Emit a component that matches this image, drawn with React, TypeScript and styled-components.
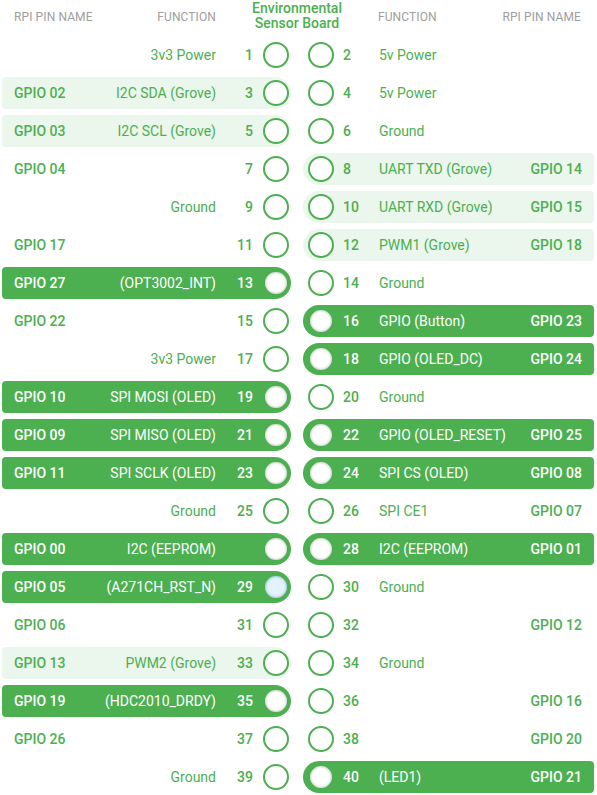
import React from 'react';
import styled, { createGlobalStyle, css } from 'styled-components';

const GREEN = '#4caf50';
const PALE = '#ebf6ec';

type Variant = 'none' | 'light' | 'active';

type Pin = {
    num: number;
    name?: string;
    func?: string;
    variant?: Variant;
    hideNum?: boolean;
    focus?: boolean;
};

const leftPins: Pin[] = [
    { num: 1, func: '3v3 Power' },
    { num: 3, name: 'GPIO 02', func: 'I2C SDA (Grove)', variant: 'light' },
    { num: 5, name: 'GPIO 03', func: 'I2C SCL (Grove)', variant: 'light' },
    { num: 7, name: 'GPIO 04' },
    { num: 9, func: 'Ground' },
    { num: 11, name: 'GPIO 17' },
    { num: 13, name: 'GPIO 27', func: '(OPT3002_INT)', variant: 'active' },
    { num: 15, name: 'GPIO 22' },
    { num: 17, func: '3v3 Power' },
    { num: 19, name: 'GPIO 10', func: 'SPI MOSI (OLED)', variant: 'active' },
    { num: 21, name: 'GPIO 09', func: 'SPI MISO (OLED)', variant: 'active' },
    { num: 23, name: 'GPIO 11', func: 'SPI SCLK (OLED)', variant: 'active' },
    { num: 25, func: 'Ground' },
    { num: 27, name: 'GPIO 00', func: 'I2C (EEPROM)', variant: 'active', hideNum: true },
    { num: 29, name: 'GPIO 05', func: '(A271CH_RST_N)', variant: 'active', focus: true },
    { num: 31, name: 'GPIO 06' },
    { num: 33, name: 'GPIO 13', func: 'PWM2 (Grove)', variant: 'light' },
    { num: 35, name: 'GPIO 19', func: '(HDC2010_DRDY)', variant: 'active' },
    { num: 37, name: 'GPIO 26' },
    { num: 39, func: 'Ground' },
];

const rightPins: Pin[] = [
    { num: 2, func: '5v Power' },
    { num: 4, func: '5v Power' },
    { num: 6, func: 'Ground' },
    { num: 8, name: 'GPIO 14', func: 'UART TXD (Grove)', variant: 'light' },
    { num: 10, name: 'GPIO 15', func: 'UART RXD (Grove)', variant: 'light' },
    { num: 12, name: 'GPIO 18', func: 'PWM1 (Grove)', variant: 'light' },
    { num: 14, func: 'Ground' },
    { num: 16, name: 'GPIO 23', func: 'GPIO (Button)', variant: 'active' },
    { num: 18, name: 'GPIO 24', func: 'GPIO (OLED_DC)', variant: 'active' },
    { num: 20, func: 'Ground' },
    { num: 22, name: 'GPIO 25', func: 'GPIO (OLED_RESET)', variant: 'active' },
    { num: 24, name: 'GPIO 08', func: 'SPI CS (OLED)', variant: 'active' },
    { num: 26, name: 'GPIO 07', func: 'SPI CE1' },
    { num: 28, name: 'GPIO 01', func: 'I2C (EEPROM)', variant: 'active' },
    { num: 30, func: 'Ground' },
    { num: 32, name: 'GPIO 12' },
    { num: 34, func: 'Ground' },
    { num: 36, name: 'GPIO 16' },
    { num: 38, name: 'GPIO 20' },
    { num: 40, name: 'GPIO 21', func: '(LED1)', variant: 'active' },
];

const GlobalStyle = createGlobalStyle`
    body {
        margin: 0;
        background: #fff;
        font-family: Roboto, "Liberation Sans", sans-serif;
    }
`;

const Page = styled.div`
    width: 597px;
    padding: 0 3px 0 2px;
    box-sizing: border-box;
`;

const Header = styled.div`
    display: grid;
    grid-template-columns: 202px 1fr 203px;
    align-items: center;
    height: 33px;
    padding: 0 13px 0 12px;
    margin-bottom: 6px;
    box-sizing: border-box;
`;

const HeadGroup = styled.div`
    display: flex;
    justify-content: space-between;
    font-size: 12px;
    color: #9e9e9e;
    letter-spacing: 0.1px;
`;

const Title = styled.div`
    text-align: center;
    color: ${GREEN};
    font-size: 14px;
    font-weight: 500;
    line-height: 15px;
    margin-top: -1px;
`;

const Board = styled.div`
    display: grid;
    grid-template-columns: 289px 291px;
    column-gap: 12px;
    row-gap: 6px;
`;

const rowLook = (v: Variant) => {
    switch (v) {
        case 'active':
            return css`
                background: ${GREEN};
                color: #fff;
            `;
        case 'light':
            return css`
                background: ${PALE};
                color: ${GREEN};
            `;
        default:
            return css`
                background: transparent;
                color: ${GREEN};
            `;
    }
};

const LeftRow = styled.div<{ $variant: Variant }>`
    display: flex;
    align-items: center;
    height: 32px;
    padding: 0 2px 0 12px;
    border-radius: 4px 16px 16px 4px;
    ${(p) => rowLook(p.$variant)}
`;

const RightRow = styled.div<{ $variant: Variant }>`
    display: flex;
    align-items: center;
    height: 32px;
    padding: 0 12px 0 5px;
    border-radius: 16px 4px 4px 16px;
    ${(p) => rowLook(p.$variant)}
`;

const Name = styled.span<{ $right?: boolean }>`
    flex: ${(p) => (p.$right ? '0 0 auto' : '1')};
    font-size: 14px;
    font-weight: 500;
    white-space: nowrap;
`;

const Func = styled.span<{ $right?: boolean }>`
    flex: ${(p) => (p.$right ? '1' : '0 0 auto')};
    font-size: 14px;
    white-space: nowrap;
`;

const Num = styled.span<{ $right?: boolean }>`
    font-size: 14px;
    font-weight: 500;
    ${(p) =>
        p.$right
            ? css`
                  width: 36px;
                  margin-left: 9px;
                  text-align: left;
              `
            : css`
                  width: 37px;
                  margin-right: 10px;
                  text-align: right;
              `}
`;

const Dot = styled.span<{ $active: boolean; $focus?: boolean }>`
    flex: 0 0 auto;
    width: 26px;
    height: 26px;
    box-sizing: border-box;
    border-radius: 50%;
    border: 2px solid ${GREEN};
    background: ${(p) => (p.$active && p.$focus ? '#e3f2fd' : '#fff')};
    box-shadow: ${(p) =>
        p.$active
            ? p.$focus
                ? 'inset 0 0 2px 1px rgba(100, 150, 200, 0.45)'
                : 'inset 0 0 2px 1px rgba(0, 0, 0, 0.18)'
            : 'none'};
`;

function LeftPin({ pin }: { pin: Pin }) {
    const v = pin.variant ?? 'none';
    return (
        <LeftRow $variant={v}>
            <Name>{pin.name}</Name>
            <Func>{pin.func}</Func>
            <Num>{pin.hideNum ? '' : pin.num}</Num>
            <Dot $active={v === 'active'} $focus={pin.focus} />
        </LeftRow>
    );
}

function RightPin({ pin }: { pin: Pin }) {
    const v = pin.variant ?? 'none';
    return (
        <RightRow $variant={v}>
            <Dot $active={v === 'active'} $focus={pin.focus} />
            <Num $right>{pin.num}</Num>
            <Func $right>{pin.func}</Func>
            <Name $right>{pin.name}</Name>
        </RightRow>
    );
}

export default function App() {
    return (
        <>
            <GlobalStyle />
            <Page>
                <Header>
                    <HeadGroup>
                        <span>RPI PIN NAME</span>
                        <span>FUNCTION</span>
                    </HeadGroup>
                    <Title>
                        Environmental
                        <br />
                        Sensor Board
                    </Title>
                    <HeadGroup>
                        <span>FUNCTION</span>
                        <span>RPI PIN NAME</span>
                    </HeadGroup>
                </Header>
                <Board>
                    {leftPins.map((lp, i) => (
                        <React.Fragment key={lp.num}>
                            <LeftPin pin={lp} />
                            <RightPin pin={rightPins[i]} />
                        </React.Fragment>
                    ))}
                </Board>
            </Page>
        </>
    );
}
